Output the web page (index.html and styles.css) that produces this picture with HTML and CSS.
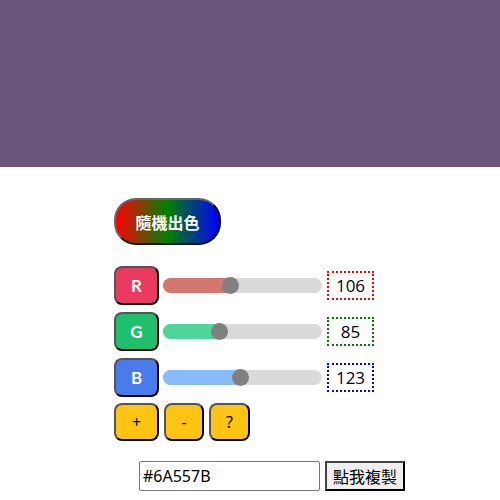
FILE: index.html
```html
<!DOCTYPE html>
<html>
<head>
<meta charset="utf-8">
<link rel="stylesheet" href="styles.css">
</head>
<body>
<div class="header"></div>
<div class="panel">
  <button class="random">隨機出色</button>
  <div class="rows">
    <div class="row">
      <button class="chan chan-r">R</button>
      <div class="slider">
        <div class="fill fill-r" style="width:67px"></div>
        <div class="thumb" style="left:59px"></div>
      </div>
      <div class="val val-r">106</div>
    </div>
    <div class="row">
      <button class="chan chan-g">G</button>
      <div class="slider">
        <div class="fill fill-g" style="width:56px"></div>
        <div class="thumb" style="left:48px"></div>
      </div>
      <div class="val val-g">85</div>
    </div>
    <div class="row">
      <button class="chan chan-b">B</button>
      <div class="slider">
        <div class="fill fill-b" style="width:77px"></div>
        <div class="thumb" style="left:69px"></div>
      </div>
      <div class="val val-b">123</div>
    </div>
    <div class="ops">
      <button class="op op-plus">+</button>
      <button class="op op-minus">-</button>
      <button class="op op-help">?</button>
    </div>
  </div>
  <div class="copy">
    <input class="hex" type="text" value="#6A557B">
    <button class="copybtn">點我複製</button>
  </div>
</div>
</body>
</html>
```
FILE: styles.css
```css
html, body {
  margin: 0;
  padding: 0;
  background: #fff;
  font-family: "Noto Sans", "Noto Sans CJK TC", sans-serif;
}
.header {
  height: 167px;
  background: #6A557B;
}
.panel {
  padding: 31px 0 0 114px;
}
.random {
  display: block;
  width: 107px;
  height: 47px;
  border: 2px outset #666;
  border-radius: 22px;
  background: linear-gradient(to right, #ff0000, #008000, #0000ff);
  color: #fff;
  font-family: "Noto Sans CJK TC", sans-serif;
  font-weight: bold;
  font-size: 16px;
  padding: 0;
}
.rows {
  margin-top: 21px;
  display: flex;
  flex-direction: column;
  gap: 7px;
}
.row {
  display: flex;
  align-items: center;
}
.chan {
  width: 45px;
  height: 39px;
  border: 2px outset #555;
  border-radius: 8px;
  color: #fff;
  font-family: "Lato", sans-serif;
  font-weight: bold;
  font-size: 17px;
  padding: 0;
}
.chan-r { background: #EA3A5E; }
.chan-g { background: #1FBF6E; }
.chan-b { background: #4A7BEC; }
.slider {
  position: relative;
  width: 159px;
  height: 15px;
  margin-left: 4px;
  border-radius: 8px;
  background: #DADADA;
}
.fill {
  height: 15px;
  border-radius: 8px 0 0 8px;
}
.fill-r { background: #D4776E; }
.fill-g { background: #4FD59C; }
.fill-b { background: #88BBFB; }
.thumb {
  position: absolute;
  top: -1px;
  width: 17px;
  height: 17px;
  border-radius: 50%;
  background: #808080;
}
.val {
  width: 43px;
  height: 25px;
  margin-left: 5px;
  text-align: center;
  line-height: 25px;
  font-family: "Open Sans", sans-serif;
  font-size: 17px;
  color: #000;
}
.val-r { border: 2px dotted #ff0000; }
.val-g { border: 2px dotted #008000; }
.val-b { border: 2px dotted #0000ff; }
.ops {
  display: flex;
  gap: 5px;
  margin-top: -1px;
}
.op {
  height: 38px;
  border: 2px outset #555;
  border-radius: 8px;
  background: #FFC312;
  color: #000;
  font-family: "Noto Sans", sans-serif;
  font-size: 16px;
  padding: 0;
}
.op-plus { width: 45px; }
.op-minus { width: 40px; }
.op-help { width: 41px; }
.copy {
  display: flex;
  gap: 5px;
  margin: 20px 0 0 25px;
}
.hex {
  box-sizing: border-box;
  width: 181px;
  height: 30px;
  border: 1px solid #767676;
  border-radius: 2px;
  padding: 0 3px;
  font-family: "Noto Sans", sans-serif;
  font-size: 16px;
  color: #000;
  margin: 0;
}
.copybtn {
  box-sizing: border-box;
  width: 80px;
  height: 30px;
  border: 2px outset #444;
  background: #EFEFEF;
  font-family: "Noto Sans CJK TC", sans-serif;
  font-size: 16px;
  color: #000;
  padding: 0;
  margin: 0;
}
```
